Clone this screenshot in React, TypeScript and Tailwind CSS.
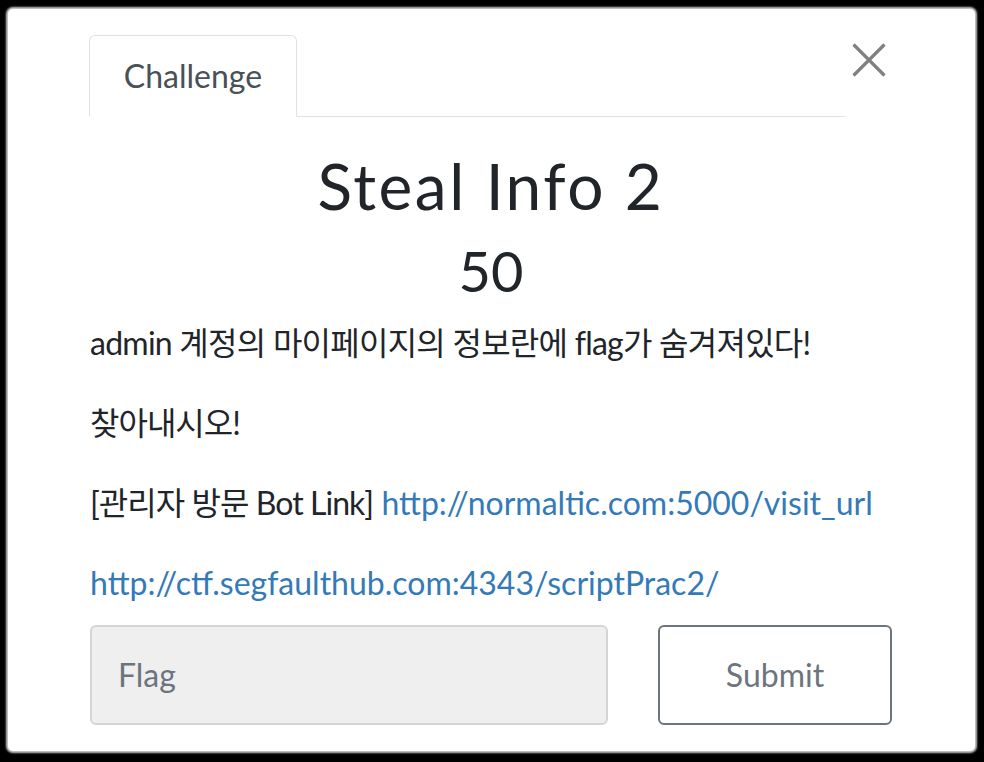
import React from 'react';

const font = "font-['Lato','Noto_Sans_CJK_KR',sans-serif]";

function CloseIcon() {
  return (
    <svg width="34" height="34" viewBox="0 0 34 34" className="block">
      <path d="M1.5 1.5L32.5 32.5M32.5 1.5L1.5 32.5" stroke="#808080" strokeWidth="3.2" fill="none" />
    </svg>
  );
}

export default function App() {
  return (
    <div className={`w-[984px] h-[762px] bg-black pt-[9px] pl-[8px] pr-[9px] pb-[11px] ${font}`}>
      <div className="h-full bg-white rounded-[5px] shadow-[0_0_2px_2px_#c8c8c8] pl-[82px] pr-[83px] pt-[26px]">
        <div className="flex items-start">
          <div className="w-[755px] flex border-b border-[#dee2e6]">
            <div className="w-[208px] h-[82px] -mb-px -ml-px bg-white border border-b-white border-[#dee2e6] rounded-t-[6px] flex items-center justify-center">
              <span className="text-[32px] text-[#495057]">Challenge</span>
            </div>
          </div>
          <button className="ml-[7px] mt-[8px]">
            <CloseIcon />
          </button>
        </div>

        <h3 className="mt-[31px] text-center text-[64px] leading-[1.2] tracking-[2.5px] text-[#212529]">Steal Info 2</h3>
        <h4 className="mt-[12px] text-center text-[56px] leading-[1.2] text-[#212529]">50</h4>

        <div className="mt-[19px] text-[32px] leading-[40px] text-[#212529]">
          <p className="mb-[40px] tracking-[-0.75px]">admin 계정의 마이페이지의 정보란에 flag가 숨겨져있다!</p>
          <p className="mb-[40px] tracking-[-1px]">찾아내시오!</p>
          <p className="mb-[40px]">
            <span className="tracking-[-0.95px]">[관리자 방문 Bot Link]</span>{' '}
            <a className="text-[#337ab7]">http://normaltic.com:5000/visit_url</a>
          </p>
          <p>
            <a className="text-[#337ab7]">http://ctf.segfaulthub.com:4343/scriptPrac2/</a>
          </p>
        </div>

        <div className="mt-[22px] flex gap-[50px]">
          <div className="w-[518px] h-[100px] bg-[#efefef] border-2 border-[#d3d6d9] rounded-[6px] flex items-center pl-[26px]">
            <span className="text-[32px] text-[#6c757d]">Flag</span>
          </div>
          <button className="w-[234px] h-[100px] border-2 border-[#6c757d] rounded-[6px] text-[32px] text-[#6c757d]">
            Submit
          </button>
        </div>
      </div>
    </div>
  );
}
